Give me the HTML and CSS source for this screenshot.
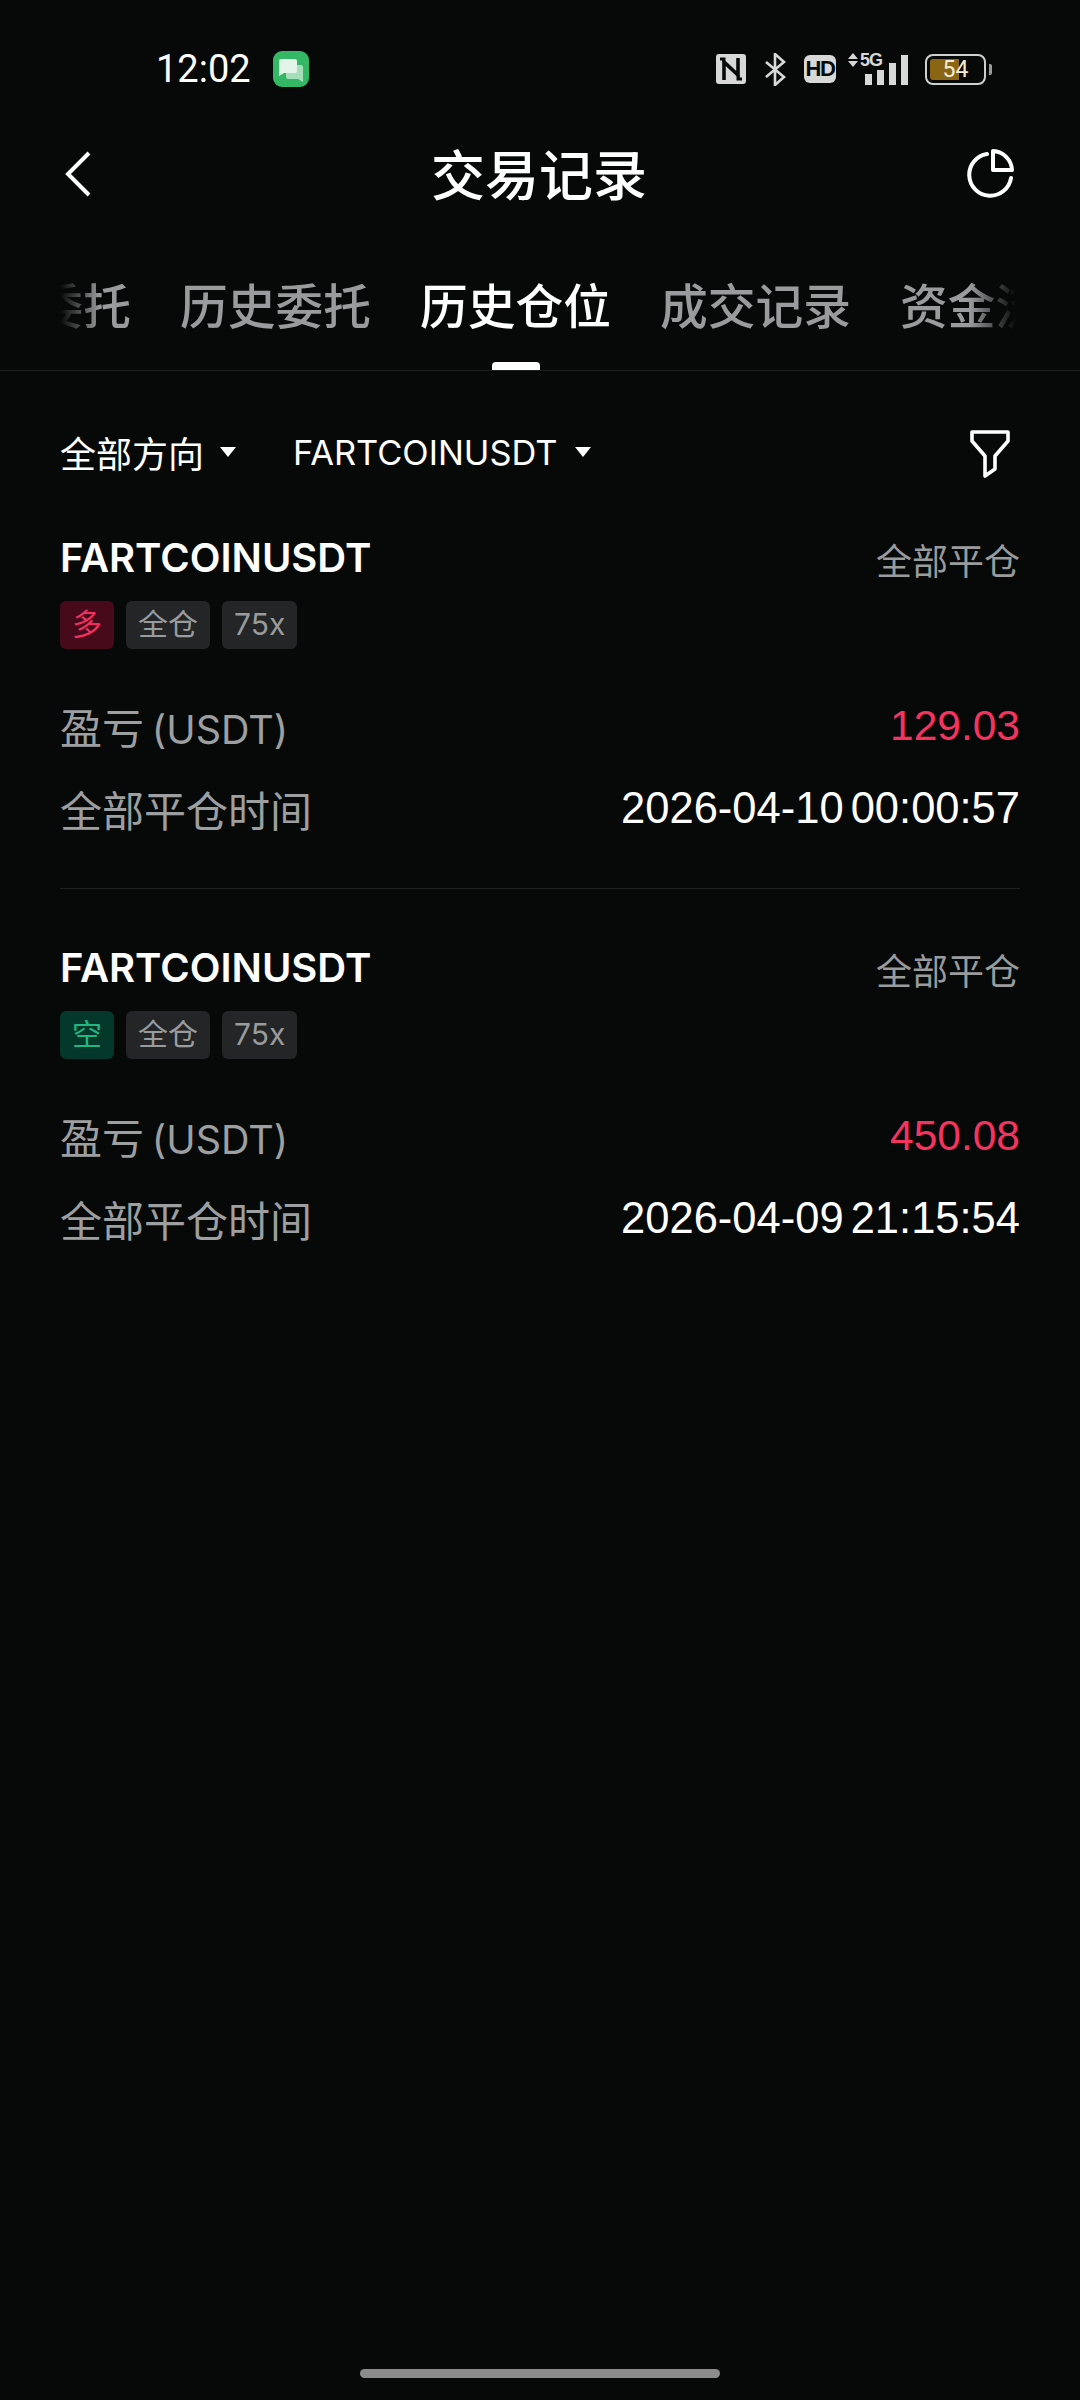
FILE: index.html
```html
<!DOCTYPE html>
<html lang="zh-CN">
<head>
    <meta charset="UTF-8">
    <meta name="viewport" content="width=device-width, initial-scale=1.0">
    <title>交易记录</title>
    <link rel="stylesheet" href="styles.css">
</head>
<body>
    <div class="page">
        <div class="status-bar">
            <div class="status-left">
                <span class="clock">12:02</span>
                <svg class="msg-icon" width="36" height="36" viewBox="0 0 36 36">
                    <rect width="36" height="36" rx="9" fill="#35b865"/>
                    <path d="M15 14h13a2 2 0 0 1 2 2v15l-5-3H15a2 2 0 0 1-2-2v-10a2 2 0 0 1 2-2z" fill="#a5dfb9"/>
                    <path d="M8 8h14a2 2 0 0 1 2 2v10a2 2 0 0 1-2 2H11l-5 3V10a2 2 0 0 1 2-2z" fill="#e3f5e9"/>
                </svg>
            </div>
            <div class="status-right">
                <svg class="nfc" width="30" height="30" viewBox="0 0 30 30">
                    <rect width="30" height="30" rx="3" fill="#d8d8d8"/>
                    <path d="M8 26V8l14 13V4" fill="none" stroke="#070909" stroke-width="3.6"/>
                    <path d="M22 21v4h4M8 9V5H4" fill="none" stroke="#070909" stroke-width="3"/>
                </svg>
                <svg class="bt" width="21" height="33" viewBox="0 0 21 33">
                    <path d="M1 9l18 15-9 8V1l9 8L1 24" fill="none" stroke="#d8d8d8" stroke-width="2.6"/>
                </svg>
                <span class="hd">HD</span>
                <div class="signal">
                    <svg class="updown" width="10" height="14" viewBox="0 0 10 14">
                        <path d="M5 0l5 6H0zM5 14l5-6H0z" fill="#d8d8d8"/>
                    </svg>
                    <span class="net">5G</span>
                    <div class="bars">
                        <i class="bar bar-1"></i>
                        <i class="bar bar-2"></i>
                        <i class="bar bar-3"></i>
                        <i class="bar bar-4"></i>
                    </div>
                </div>
                <div class="battery">
                    <div class="battery-body">
                        <div class="battery-fill"></div>
                        <span class="battery-num">54</span>
                    </div>
                    <i class="battery-cap"></i>
                </div>
            </div>
        </div>

        <div class="header">
            <svg class="back" width="30" height="48" viewBox="0 0 30 48">
                <path d="M26 3L5 24l21 21" fill="none" stroke="#fff" stroke-width="4"/>
            </svg>
            <h1>交易记录</h1>
            <svg class="pie" width="50" height="50" viewBox="0 0 50 50">
                <path d="M22 6a21 21 0 1 0 24 24" fill="none" stroke="#fff" stroke-width="4" stroke-linecap="round"/>
                <path d="M28 3a20 20 0 0 1 19 19H28z" fill="none" stroke="#fff" stroke-width="4" stroke-linejoin="round"/>
            </svg>
        </div>

        <div class="tabs">
            <div class="tabs-track">
                <span class="tab">当前委托</span>
                <span class="tab">历史委托</span>
                <span class="tab active">历史仓位</span>
                <span class="tab">成交记录</span>
                <span class="tab">资金流水</span>
            </div>
        </div>

        <div class="filters">
            <div class="filter-item">全部方向<i class="caret"></i></div>
            <div class="filter-item filter-symbol">FARTCOINUSDT<i class="caret"></i></div>
            <svg class="funnel" width="42" height="50" viewBox="0 0 42 50">
                <path d="M3 3h36v9L26 27v13l-10 7V27L3 12z" fill="none" stroke="#fff" stroke-width="3.6" stroke-linejoin="round"/>
            </svg>
        </div>

        <div class="card">
            <div class="card-top">
                <span class="symbol">FARTCOINUSDT</span>
                <span class="close-type">全部平仓</span>
            </div>
            <div class="tags">
                <span class="tag tag-long">多</span>
                <span class="tag">全仓</span>
                <span class="tag">75x</span>
            </div>
            <div class="rows">
                <div class="row">
                    <span class="row-label">盈亏 <span class="unit">(USDT)</span></span>
                    <span class="row-value profit">129.03</span>
                </div>
                <div class="row">
                    <span class="row-label">全部平仓时间</span>
                    <span class="row-value">2026-04-10 00:00:57</span>
                </div>
            </div>
        </div>

        <div class="card">
            <div class="card-top">
                <span class="symbol">FARTCOINUSDT</span>
                <span class="close-type">全部平仓</span>
            </div>
            <div class="tags">
                <span class="tag tag-short">空</span>
                <span class="tag">全仓</span>
                <span class="tag">75x</span>
            </div>
            <div class="rows">
                <div class="row">
                    <span class="row-label">盈亏 <span class="unit">(USDT)</span></span>
                    <span class="row-value profit">450.08</span>
                </div>
                <div class="row">
                    <span class="row-label">全部平仓时间</span>
                    <span class="row-value">2026-04-09 21:15:54</span>
                </div>
            </div>
        </div>

        <div class="home-bar"></div>
    </div>
</body>
</html>
```
FILE: styles.css
```css
* {
    box-sizing: border-box;
}
html, body {
    margin: 0;
    padding: 0;
    background-color: #070909;
}
body {
    font-family: Inter, "Noto Sans CJK SC", sans-serif;
    color: #fff;
}
.page {
    width: 1080px;
    height: 2400px;
    display: flex;
    flex-direction: column;
    overflow: hidden;
}

/* status bar */
.status-bar {
    height: 70px;
    margin-top: 34px;
    padding: 0 88px 0 156px;
    display: flex;
    align-items: center;
    justify-content: space-between;
}
.status-left {
    display: flex;
    align-items: center;
    gap: 22px;
}
.clock {
    font-family: Roboto, sans-serif;
    font-size: 38px;
}
.status-right {
    display: flex;
    align-items: center;
    gap: 19px;
    height: 34px;
}
.hd {
    width: 32px;
    height: 28px;
    margin-left: -1px;
    border-radius: 6px;
    background-color: #d8d8d8;
    color: #070909;
    font-family: "Liberation Sans", sans-serif;
    font-size: 22px;
    font-weight: bold;
    line-height: 28px;
    text-align: center;
    letter-spacing: -1.5px;
}
.signal {
    position: relative;
    width: 61px;
    height: 32px;
    margin-left: -7px;
}
.updown {
    position: absolute;
    left: 0;
    top: 0;
}
.net {
    position: absolute;
    left: 12px;
    top: -1px;
    color: #d8d8d8;
    font-family: "Liberation Sans", sans-serif;
    font-size: 18px;
    font-weight: bold;
    line-height: 17px;
    letter-spacing: -1px;
}
.bars {
    position: absolute;
    left: 17px;
    right: 0;
    bottom: 0;
    height: 30px;
    display: flex;
    align-items: flex-end;
    gap: 5px;
}
.bar {
    width: 7px;
    background-color: #d8d8d8;
}
.bar-1 { height: 11px; }
.bar-2 { height: 15px; }
.bar-3 { height: 22px; }
.bar-4 { height: 30px; }
.battery {
    display: flex;
    align-items: center;
    gap: 3px;
    margin-left: -3px;
}
.battery-body {
    position: relative;
    width: 61px;
    height: 31px;
    border: 2px solid #cfcfcf;
    border-radius: 8px;
}
.battery-fill {
    position: absolute;
    left: 3px;
    top: 3px;
    bottom: 3px;
    width: 29px;
    background-color: #8a6514;
    border-radius: 3px 0 0 3px;
}
.battery-num {
    position: absolute;
    left: 0;
    right: 0;
    top: 0;
    text-align: center;
    font-family: Roboto, sans-serif;
    font-size: 23px;
    line-height: 27px;
    color: #f2ecd8;
}
.battery-cap {
    width: 3px;
    height: 11px;
    background-color: #9a9a9a;
    border-radius: 0 2px 2px 0;
}

/* title */
.header {
    height: 138px;
    margin-bottom: 4px;
    padding: 0 65px 0 63px;
    display: grid;
    grid-template-columns: 1fr auto 1fr;
    align-items: center;
}
.header h1 {
    margin: 0 0 2px;
    font-size: 54px;
    font-weight: 500;
}
.back {
    margin-top: 2px;
}
.pie {
    justify-self: end;
}

/* tabs */
.tabs {
    height: 125px;
    padding: 0 64px 0 60px;
    border-bottom: 1px solid #1f2021;
}
.tabs-track {
    height: 124px;
    overflow: hidden;
    -webkit-mask-image: linear-gradient(to right, transparent 0, #000 40px, #000 910px, transparent 956px);
    mask-image: linear-gradient(to right, transparent 0, #000 40px, #000 910px, transparent 956px);
    display: flex;
    gap: 49px;
}
.tab {
    position: relative;
    flex: none;
    width: 191px;
    height: 124px;
    line-height: 122px;
    font-size: 47.75px;
    font-weight: 500;
    color: #999b9c;
    white-space: nowrap;
}
.tab:first-child {
    margin-left: -120px;
}
.tab.active {
    color: #fff;
}
.tab.active::after {
    content: "";
    position: absolute;
    left: 72px;
    bottom: 0;
    width: 48px;
    height: 8px;
    border-radius: 4px 4px 0 0;
    background-color: #fff;
}

/* filter row */
.filters {
    height: 162px;
    padding: 0 69px 0 60px;
    display: flex;
    align-items: center;
    gap: 57px;
}
.filter-item {
    display: flex;
    align-items: center;
    gap: 16px;
    font-size: 36px;
}
.filter-symbol {
    gap: 18px;
    font-size: 34.4px;
}
.caret {
    width: 0;
    height: 0;
    border-left: 8px solid transparent;
    border-right: 8px solid transparent;
    border-top: 10px solid #fff;
}
.funnel {
    margin: 4px 0 0 auto;
}

/* position cards */
.card {
    margin: 0 60px;
    padding-bottom: 38px;
}
.card + .card {
    border-top: 1px solid #1f2021;
    padding-top: 54px;
}
.card-top {
    height: 52px;
    display: flex;
    align-items: center;
    justify-content: space-between;
}
.symbol {
    padding-bottom: 3px;
    font-size: 40px;
    font-weight: 600;
}
.close-type {
    font-size: 36px;
    color: #999b9c;
}
.tags {
    margin-top: 16px;
    display: flex;
    gap: 12px;
}
.tag {
    height: 48px;
    padding: 0 12px;
    border-radius: 6px;
    background-color: #242526;
    color: #999b9c;
    font-size: 30px;
    line-height: 47px;
}
.tag-long {
    background-color: #470a1b;
    color: #f2305f;
}
.tag-short {
    background-color: #04382a;
    color: #21b682;
}
.rows {
    margin-top: 35px;
}
.row {
    height: 83px;
    display: flex;
    align-items: center;
    justify-content: space-between;
}
.row-label {
    font-size: 42px;
    color: #9d9fa0;
}
.unit {
    margin-left: -4px;
    font-size: 39.5px;
}
.row-value {
    font-family: "Liberation Sans", sans-serif;
    font-size: 43.5px;
    word-spacing: -5px;
}
.profit {
    color: #f5335f;
    font-size: 42.5px;
}

.home-bar {
    flex: none;
    width: 360px;
    height: 9px;
    margin: auto auto 22px;
    border-radius: 5px;
    background-color: #8c8c8c;
}
```
